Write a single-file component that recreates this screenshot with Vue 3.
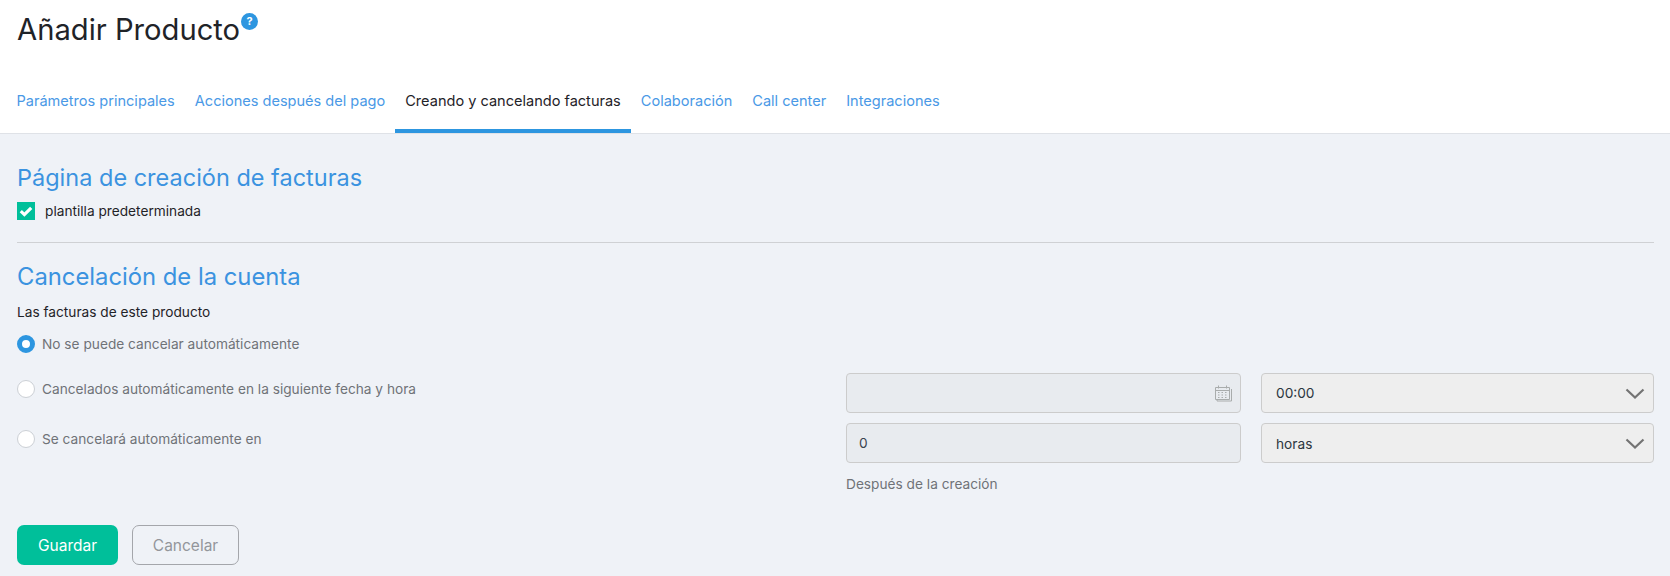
<script setup>
const tabs = [
  { label: 'Parámetros principales' },
  { label: 'Acciones después del pago' },
  { label: 'Creando y cancelando facturas', active: true },
  { label: 'Colaboración' },
  { label: 'Call center' },
  { label: 'Integraciones' },
]
</script>

<template>
  <div class="page">
    <header class="head">
      <h1 class="title">Añadir Producto<span class="help">?</span></h1>
      <nav class="tabs">
        <a v-for="t in tabs" :key="t.label" class="tab" :class="{ active: t.active }">{{ t.label }}</a>
      </nav>
    </header>
    <main class="body">
      <h2 class="section first">Página de creación de facturas</h2>
      <label class="check">
        <span class="box">
          <svg width="18" height="18" viewBox="0 0 18 18"><path d="M3.800 9.200l3.600 3.400L14.200 5.800" fill="none" stroke="#fff" stroke-width="3.200"/></svg>
        </span>
        plantilla predeterminada
      </label>
      <hr class="rule" />
      <h2 class="section wide">Cancelación de la cuenta</h2>
      <div class="lead">Las facturas de este producto</div>
      <div class="radio one"><span class="dot on"></span>No se puede cancelar automáticamente</div>
      <div class="grid">
        <div class="radio"><span class="dot"></span>Cancelados automáticamente en la siguiente fecha y hora</div>
        <div class="field">
          <svg class="cal" width="18" height="18" viewBox="0 0 18 18" fill="none" stroke="#a9acac">
            <path d="M1.500 3.500h14v12h-14zM1.500 6.500h14M4.500 1.500v3M12.500 1.500v3M3 15.500v1.500h14.500V5"/>
            <path d="M4 8.500h2M7.500 8.500h2M11 8.500h2M4 11h2M7.500 11h2M11 11h2M4 13.500h2M7.500 13.500h2M11 13.500h2" stroke-dasharray="1.500 .5"/>
          </svg>
        </div>
        <div class="select">00:00<svg class="arrow" width="20" height="12" viewBox="0 0 20 12"><path d="M1.500 1.500l8.500 8 8.500-8" fill="none" stroke="#737373" stroke-width="2.200"/></svg></div>

        <div class="radio"><span class="dot"></span>Se cancelará automáticamente en</div>
        <div class="field">0</div>
        <div class="select low">horas<svg class="arrow" width="20" height="12" viewBox="0 0 20 12"><path d="M1.500 1.500l8.500 8 8.500-8" fill="none" stroke="#737373" stroke-width="2.200"/></svg></div>

        <div></div>
        <div class="note">Después de la creación</div>
      </div>
      <div class="actions">
        <button class="btn save">Guardar</button>
        <button class="btn cancel">Cancelar</button>
      </div>
    </main>
  </div>
</template>

<style>
html, body { margin: 0; background: #eff2f7; }
</style>

<style scoped>
.page { width: 1670px; height: 576px; overflow: hidden; font-family: Inter, "Liberation Sans", sans-serif; font-size: 13.7px; color: #1f2328; background: #eff2f7; }
.head { background: #fff; height: 133px; border-bottom: 1px solid #dfe2e7; }
.title { margin: 0; padding: 11px 0 0 17px; font-size: 29.200px; line-height: 38px; font-weight: 400; height: 77px; display: flex; align-items: flex-start; }
.help { width: 17px; height: 17px; margin: 2px 0 0 1px; border-radius: 50%; background: #2d96e0; color: #fff; font-size: 11px; font-weight: 700; line-height: 17px; text-align: center; }
.tabs { display: flex; padding-left: 6.500px; height: 45px; }
.tab { padding: 0 10px; color: #4a99e6; font-size: 14.560px; line-height: 26px; height: 45px; box-sizing: border-box; }
.tab.active { color: #1f2328; border-bottom: 4px solid #2d96e0; }
.body { padding: 0 16px 0 17px; }
.section { margin: 0; color: #3b93e0; font-size: 23.500px; font-weight: 400; line-height: 30px; }
.section.wide { font-size: 23.800px; }
.section.first { padding-top: 29px; }
.check { display: flex; align-items: center; gap: 10px; margin-top: 9px; line-height: 18px; }
.box { width: 18px; height: 18px; background: #00bf9a; display: block; }
.box svg { display: block; }
.rule { border: 0; border-top: 1px solid #cfd1d4; margin: 22px 0 19px; }
.lead { margin-top: 11px; line-height: 18px; }
.radio { display: flex; align-items: center; gap: 7px; color: #6f7378; line-height: 18px; align-self: start; }
.radio.one { margin-top: 14px; }
.grid { display: grid; grid-template-columns: 809px 395px 393px; column-gap: 20px; row-gap: 10px; margin-top: 20px; }
.dot { width: 18px; height: 18px; border-radius: 50%; background: #fff; border: 1px solid #ccd0d5; box-sizing: border-box; flex: none; }
.dot.on { background: #fff; border: 5px solid #2d96e0; }
.grid .radio { margin-top: 7px; }
.field, .select { height: 40px; border: 1px solid #ccc; border-radius: 4px; box-sizing: border-box; padding: 0 14px; line-height: 38px; position: relative; color: #3a4450; }
.field { background: #e8ebef; padding-left: 12px; }
.select { background: #eee; color: #2b3640; }
.select.low { line-height: 40px; }
.cal { position: absolute; right: 8px; top: 10px; }
.arrow { position: absolute; right: 8px; top: 14px; }
.note { color: #6f7378; line-height: 18px; margin-top: 2px; }
.actions { display: flex; gap: 14px; margin-top: 32px; }
.btn { height: 40px; border-radius: 7px; font: inherit; font-size: 15.500px; box-sizing: border-box; }
.save { width: 101px; background: #00bf9a; color: #fff; border: 0; }
.cancel { width: 107px; background: transparent; border: 1px solid #a4a6ab; color: #93969b; }
</style>
